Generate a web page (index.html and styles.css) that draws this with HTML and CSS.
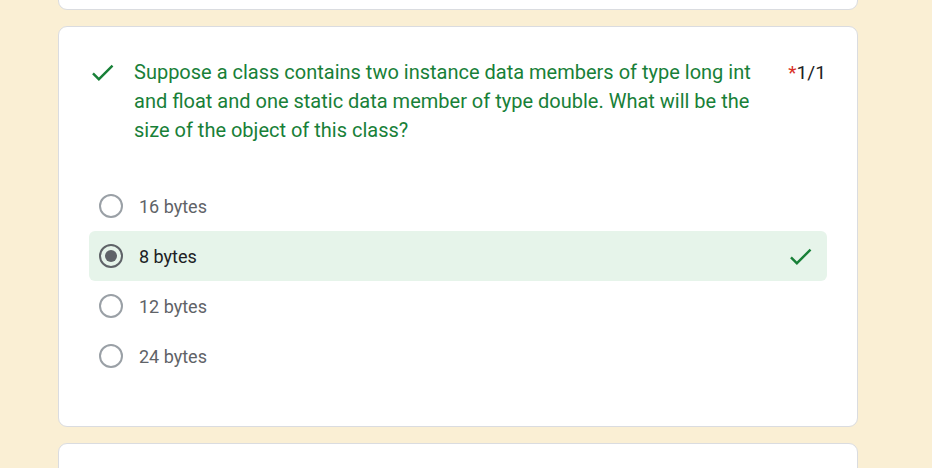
FILE: index.html
```html
<!DOCTYPE html>
<html>
<head>
<meta charset="utf-8">
<link rel="stylesheet" href="styles.css">
</head>
<body>
<div class="page">
  <div class="card card-prev"></div>
  <div class="card card-main">
    <div class="q-head">
      <svg class="q-check" width="29" height="29" viewBox="0 0 24 24"><path d="M9 16.17L4.83 12l-1.42 1.41L9 19 21 7l-1.41-1.41z" fill="#188038"/></svg>
      <div class="q-title">Suppose a class contains two instance data members of type long int and float and one static data member of type double. What will be the size of the object of this class?</div>
      <div class="q-points"><span class="req">*</span>1/1</div>
    </div>
    <div class="options">
      <div class="opt"><span class="radio"></span><span class="opt-label">16 bytes</span></div>
      <div class="opt opt-correct"><span class="radio radio-on"></span><span class="opt-label">8 bytes</span>
        <svg class="opt-check" width="29" height="29" viewBox="0 0 24 24"><path d="M9 16.17L4.83 12l-1.42 1.41L9 19 21 7l-1.41-1.41z" fill="#188038"/></svg>
      </div>
      <div class="opt"><span class="radio"></span><span class="opt-label">12 bytes</span></div>
      <div class="opt"><span class="radio"></span><span class="opt-label">24 bytes</span></div>
    </div>
  </div>
  <div class="card card-next"></div>
</div>
</body>
</html>
```
FILE: styles.css
```css
html, body {
  margin: 0;
  padding: 0;
  background: #faefd4;
  font-family: Roboto, "Liberation Sans", Arial, sans-serif;
  overflow: hidden;
}
.page {
  width: 800px;
  margin: -10px 0 0 58px;
  display: flex;
  flex-direction: column;
  gap: 16px;
}
.card {
  background: #fff;
  border: 1px solid #dadce0;
  border-radius: 9px;
  box-sizing: border-box;
}
.card-prev { height: 20px; }
.card-next { height: 40px; }
.card-main {
  padding: 31px 30px 45px 30px;
}
.q-head {
  display: flex;
  align-items: flex-start;
  margin-right: 1px;
}
.q-check {
  flex: none;
  margin: 0 17px 0 -1px;
}
.q-title {
  flex: 1;
  color: #188038;
  font-size: 20px;
  line-height: 29px;
  padding-right: 30px;
}
.q-points {
  flex: none;
  font-size: 19.2px;
  line-height: 29px;
  color: #202124;
}
.req { color: #d93025; }
.options {
  margin-top: 36px;
  display: flex;
  flex-direction: column;
}
.opt {
  height: 50px;
  display: flex;
  align-items: center;
  padding-left: 10px;
  border-radius: 6px;
  color: #5f6368;
  font-size: 18px;
}
.opt-correct {
  background: #e6f4ea;
  color: #202124;
}
.radio {
  width: 24px;
  height: 24px;
  box-sizing: border-box;
  border: 2px solid #9aa0a6;
  border-radius: 50%;
  margin-right: 16px;
  position: relative;
  flex: none;
}
.radio-on {
  border-color: #5f6368;
}
.radio-on::after {
  content: "";
  position: absolute;
  left: 4px;
  top: 4px;
  width: 12px;
  height: 12px;
  border-radius: 50%;
  background: #5f6368;
}
.opt-label { flex: 1; }
.opt-check {
  margin-right: 12px;
}
```
